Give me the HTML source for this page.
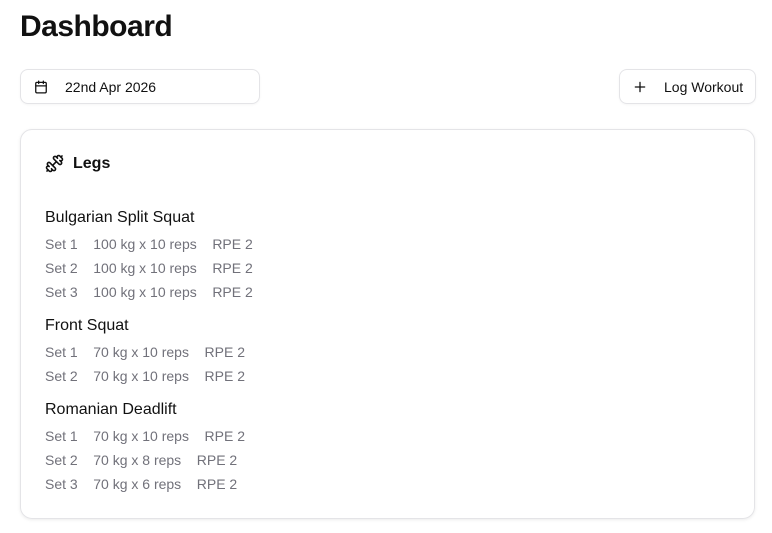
<!DOCTYPE html>
<html><head><style>
body{margin:0;background:#fff;font-family:"Liberation Sans",sans-serif;color:#111;width:772px;height:533px;overflow:hidden;position:relative}
h1{position:absolute;left:20px;top:10px;margin:0;font-size:30px;font-weight:bold;letter-spacing:-0.5px}
.btn{position:absolute;top:69px;height:35px;border:1px solid #e4e4e7;border-radius:8px;box-sizing:border-box;font-size:14px;display:flex;align-items:center;box-shadow:0 1px 2px rgba(0,0,0,.04)}
.card{position:absolute;left:20px;top:129px;width:735px;height:390px;border:1px solid #e4e4e7;border-radius:12px;box-sizing:border-box;box-shadow:0 1px 3px rgba(0,0,0,.08)}
.t{position:absolute;left:45px;font-size:16px}
.s{position:absolute;left:45px;font-size:14px;color:#71717a;white-space:pre}
</style></head><body>
<h1>Dashboard</h1>
<div class="btn" style="left:20px;width:240px">
<svg style="position:absolute;left:13px;top:10px" width="14" height="14" viewBox="0 0 24 24" fill="none" stroke="#111" stroke-width="2.2" stroke-linecap="round"><rect x="3" y="4" width="18" height="18" rx="2"/><path d="M8 2v4M16 2v4M3 10h18"/></svg>
<span style="position:absolute;left:44px;top:9px">22nd Apr 2026</span></div>
<div class="btn" style="left:619px;width:137px">
<svg style="position:absolute;left:13px;top:10px" width="14" height="14" viewBox="0 0 24 24" fill="none" stroke="#111" stroke-width="2.2" stroke-linecap="round"><path d="M12 4v16M4 12h16"/></svg>
<span style="position:absolute;left:44px;top:9px">Log Workout</span></div>
<div class="card"></div>
<svg style="position:absolute;left:45px;top:154px;transform:rotate(90deg)" width="19" height="19" viewBox="0 0 24 24" fill="none" stroke="#111" stroke-width="2" stroke-linecap="round" stroke-linejoin="round"><path d="M14.4 14.4 9.6 9.6"/><path d="M18.66 21.51a2 2 0 1 1-2.83-2.83l-1.77 1.77a2 2 0 1 1-2.83-2.83l6.37-6.37a2 2 0 1 1 2.83 2.83l-1.77 1.77a2 2 0 1 1 2.83 2.830z"/><path d="m21.5 21.5-1.4-1.4"/><path d="M3.9 3.9 2.5 2.5"/><path d="M6.4 12.77a2 2 0 1 1-2.83-2.83l1.77-1.77a2 2 0 1 1-2.83-2.83l2.83-2.83a2 2 0 1 1 2.83 2.83l1.77-1.77a2 2 0 1 1 2.83 2.83z"/></svg>
<div style="position:absolute;left:73px;top:155px;font-size:16px;font-weight:bold">Legs</div>
<div class="t" style="top:209px">Bulgarian Split Squat</div>
<div class="s" style="top:236px">Set 1    100 kg x 10 reps    RPE 2</div>
<div class="s" style="top:260px">Set 2    100 kg x 10 reps    RPE 2</div>
<div class="s" style="top:284px">Set 3    100 kg x 10 reps    RPE 2</div>
<div class="t" style="top:317px">Front Squat</div>
<div class="s" style="top:344px">Set 1    70 kg x 10 reps    RPE 2</div>
<div class="s" style="top:368px">Set 2    70 kg x 10 reps    RPE 2</div>
<div class="t" style="top:401px">Romanian Deadlift</div>
<div class="s" style="top:428px">Set 1    70 kg x 10 reps    RPE 2</div>
<div class="s" style="top:452px">Set 2    70 kg x 8 reps    RPE 2</div>
<div class="s" style="top:476px">Set 3    70 kg x 6 reps    RPE 2</div>
</body></html>
